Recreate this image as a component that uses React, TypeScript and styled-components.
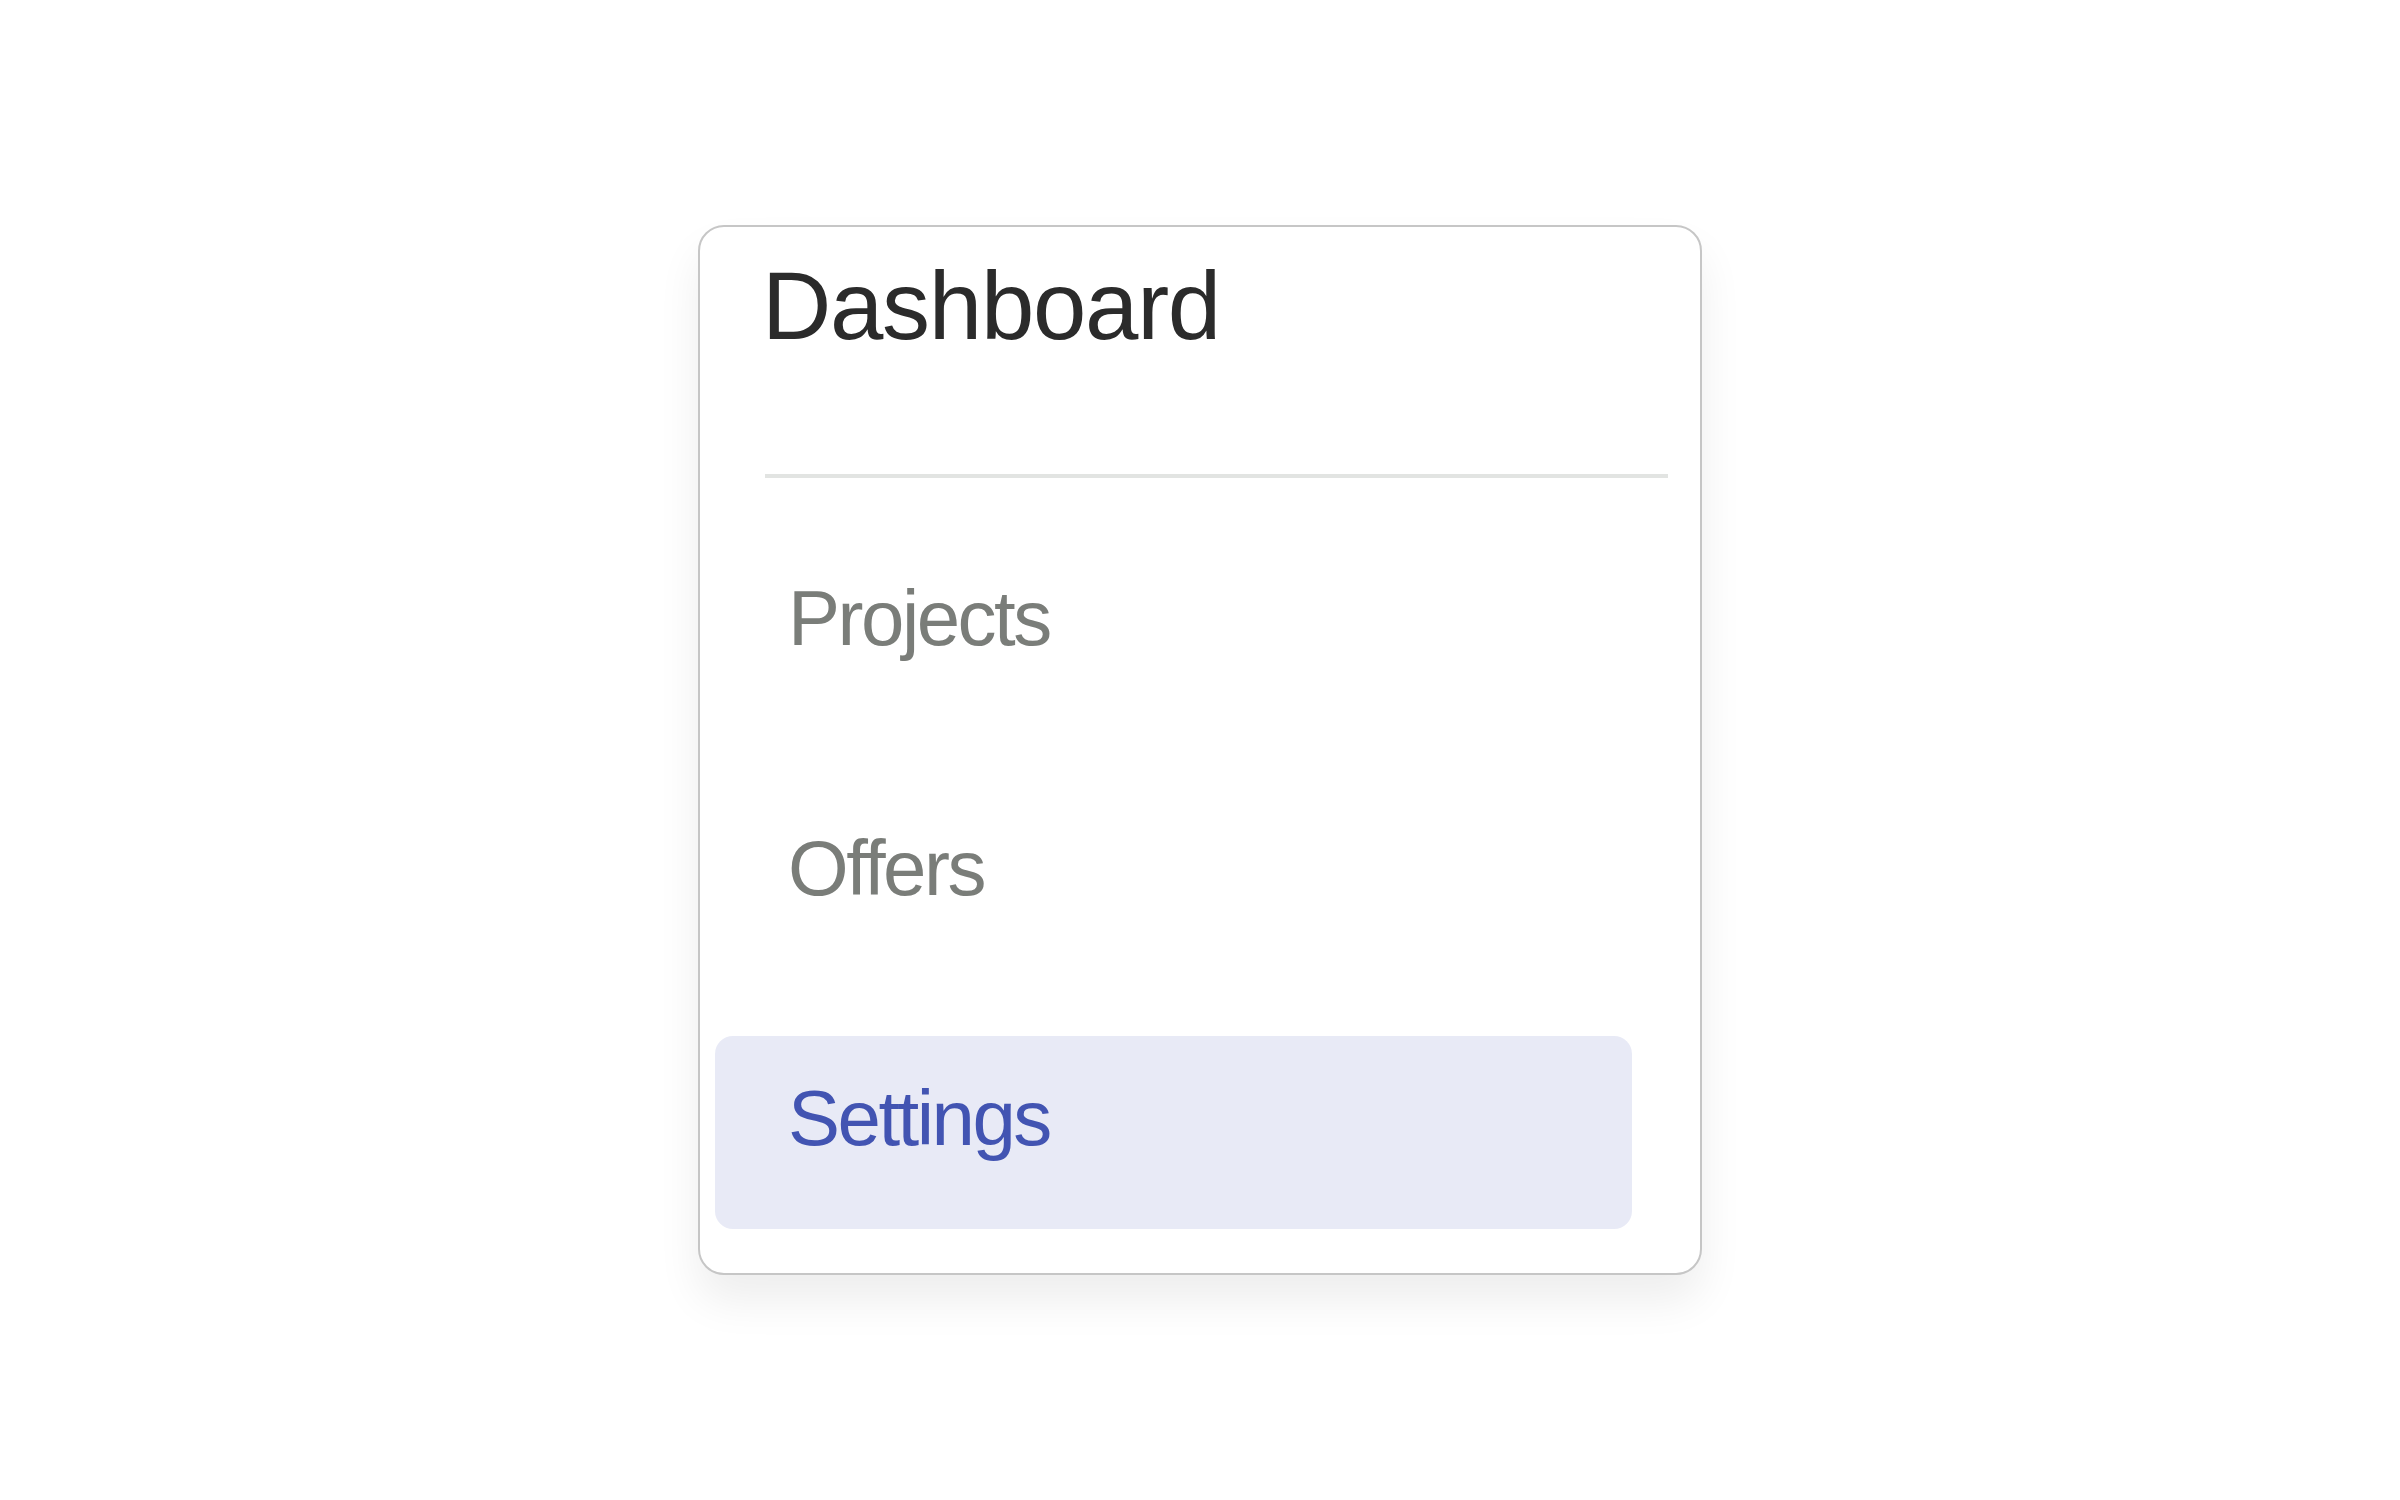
import styled, { createGlobalStyle } from 'styled-components';

const GlobalStyle = createGlobalStyle`
  html, body {
    margin: 0;
    padding: 0;
    background: #ffffff;
    font-family: "Liberation Sans", Arial, sans-serif;
  }
`;

const Page = styled.div`
  box-sizing: border-box;
  min-height: 100vh;
  padding: 225px 0 120px 698px;
`;

const Card = styled.nav`
  box-sizing: border-box;
  width: 1004px;
  padding: 24px 0 44px 0;
  background: #ffffff;
  border: 2px solid #c6c6c6;
  border-radius: 26px;
  box-shadow: 0 26px 44px rgba(0, 0, 0, 0.07);
`;

const Title = styled.h1`
  margin: 0;
  padding-left: 62px;
  font-size: 96px;
  font-weight: 400;
  letter-spacing: -1.3px;
  line-height: normal;
  color: #2b2b2b;
`;

const Divider = styled.hr`
  height: 4px;
  margin: 113px 32px 58px 65px;
  border: 0;
  background: #e2e4e2;
`;

const NavList = styled.ul`
  display: flex;
  flex-direction: column;
  gap: 57px;
  margin: 0;
  padding: 0 68px 0 15px;
  list-style: none;
`;

const NavItem = styled.li<{ $active?: boolean }>`
  box-sizing: border-box;
  height: 193px;
  padding: 37px 70px 0 73px;
  border-radius: 18px;
  font-size: 78px;
  letter-spacing: -2.5px;
  line-height: normal;
  color: ${p => (p.$active ? '#4254b2' : '#7a7d79')};
  background: ${p => (p.$active ? '#e8eaf6' : 'transparent')};
`;

const items = ['Projects', 'Offers', 'Settings'];
const activeItem = 'Settings';

function App() {
  return (
    <>
      <GlobalStyle />
      <Page>
        <Card>
          <Title>Dashboard</Title>
          <Divider />
          <NavList>
            {items.map(item => (
              <NavItem key={item} $active={item === activeItem}>
                {item}
              </NavItem>
            ))}
          </NavList>
        </Card>
      </Page>
    </>
  );
}

export default App;
